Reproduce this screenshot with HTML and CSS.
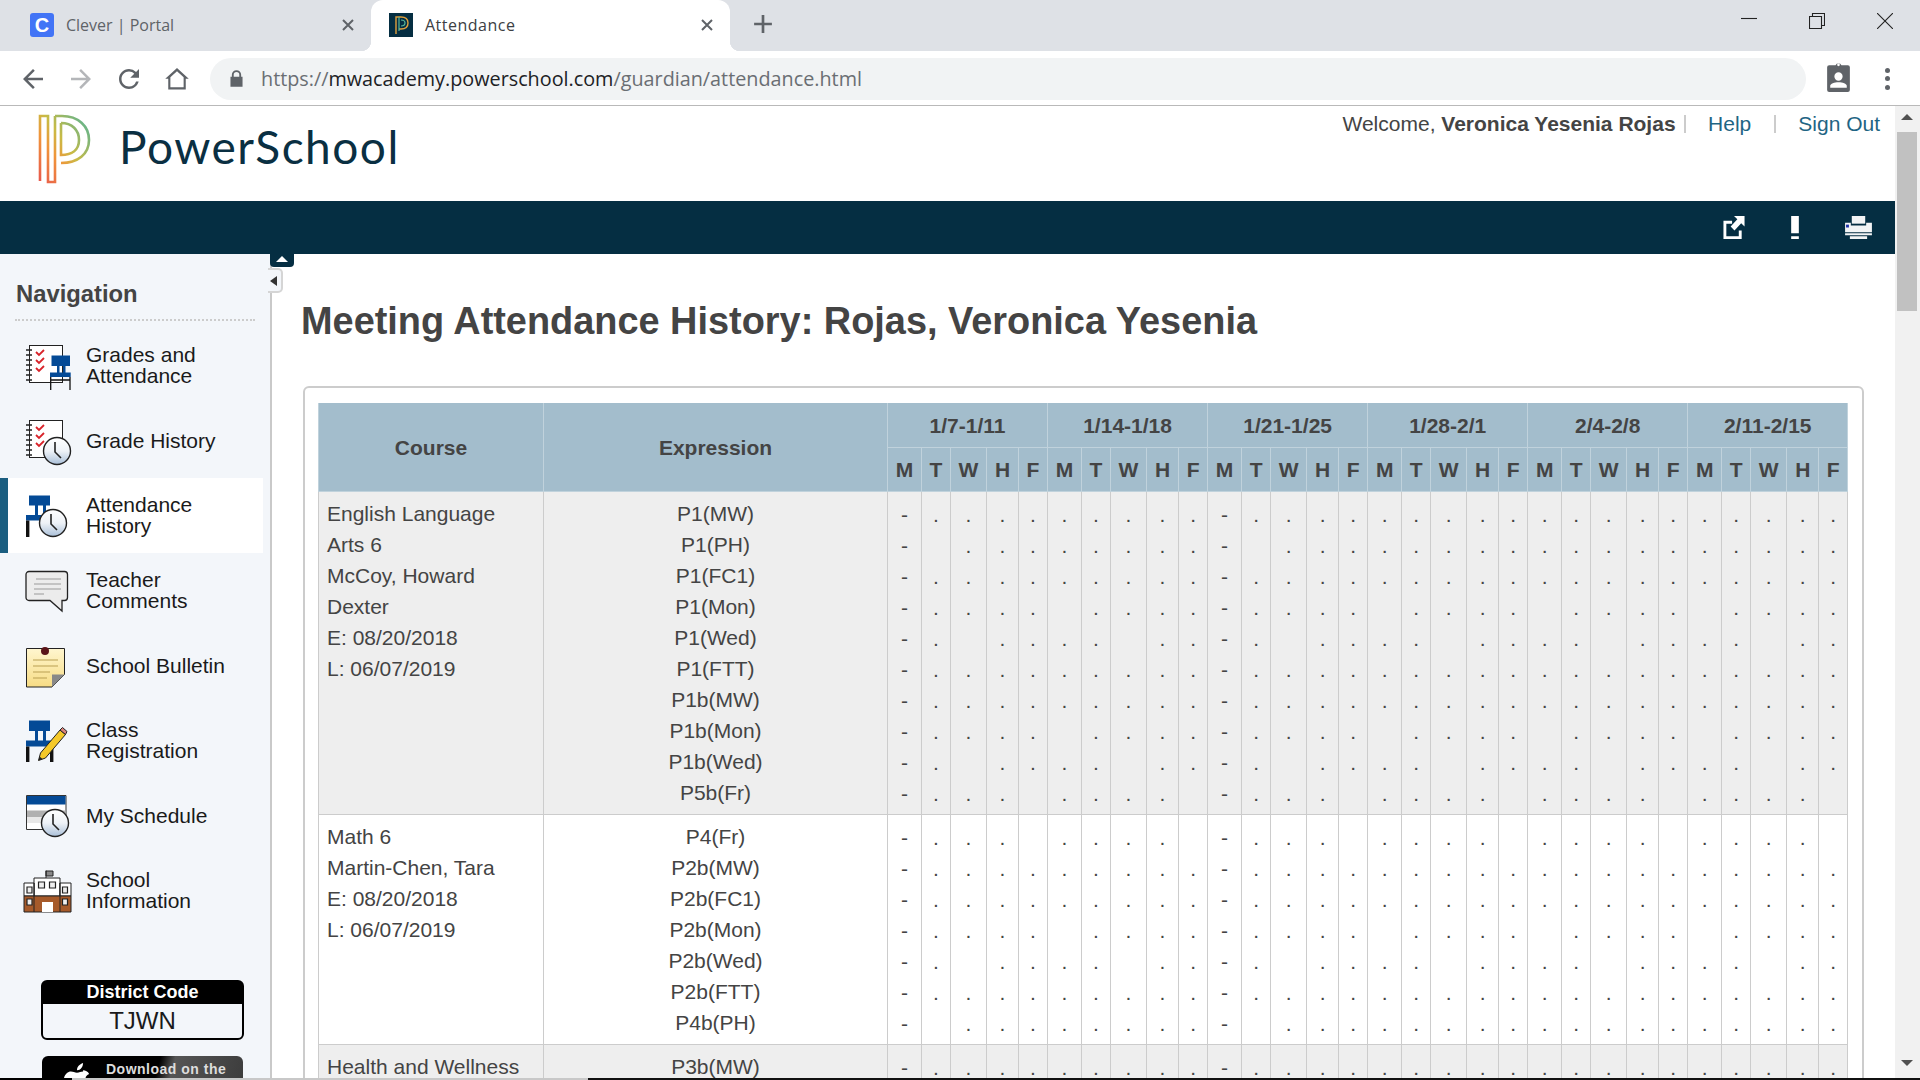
FILE: index.html
```html
<!DOCTYPE html>
<html>
<head>
<meta charset="utf-8">
<title>Attendance</title>
<link rel="stylesheet" href="styles.css">
</head>
<body>

<svg class="defs" width="0" height="0">
  <defs>
    <linearGradient id="clockfill" x1="0" y1="0" x2="0" y2="1">
      <stop offset="0" stop-color="#ffffff"/>
      <stop offset="0.5" stop-color="#eef2f7"/>
      <stop offset="1" stop-color="#a9bfd8"/>
    </linearGradient>
    <linearGradient id="notefill" x1="0" y1="0" x2="0" y2="1">
      <stop offset="0" stop-color="#fff6cf"/>
      <stop offset="1" stop-color="#f7dc84"/>
    </linearGradient>
    <linearGradient id="logoline" x1="0" y1="1" x2="1" y2="0">
      <stop offset="0" stop-color="#e8584c"/>
      <stop offset="0.35" stop-color="#f0953a"/>
      <stop offset="0.55" stop-color="#c9bb45"/>
      <stop offset="1" stop-color="#4fb39a"/>
    </linearGradient>
    <symbol id="notebook" viewBox="0 0 48 48">
      <rect x="5.5" y="3.5" width="33" height="37" fill="#fff" stroke="#222" stroke-width="1"/>
      <path d="M2 8h6M2 13h6M2 18h6M2 23h6M2 28h6M2 33h6M2 38h6" stroke="#222" stroke-width="1.4"/>
      <path d="M12 10l3 3 5-5M12 18l3 3 5-5M12 26l3 3 5-5" fill="none" stroke="#d8232a" stroke-width="1.8"/>
    </symbol>
    <symbol id="clock" viewBox="0 0 30 30">
      <circle cx="15" cy="15" r="13.5" fill="url(#clockfill)" stroke="#222" stroke-width="1.4"/>
      <path d="M13 6v10l6 6" fill="none" stroke="#222" stroke-width="1.6"/>
    </symbol>
  </defs>
</svg>

<div class="tabstrip">
  <div class="tab">
    <span class="favicon clever">C</span>
    <span class="tabtitle">Clever | Portal</span>
    <svg class="tabclose" viewBox="0 0 12 12"><path d="M1 1l10 10M11 1L1 11"/></svg>
  </div>
  <div class="tab active">
    <svg class="favicon" viewBox="0 0 24 24">
      <rect width="24" height="24" fill="#052e42"/>
      <path d="M7 21V4h5c5 0 7 3 7 6s-2 6-7 6h-2" fill="none" stroke="#e0a03c" stroke-width="1.4"/>
      <path d="M10 4v14M12 7c3 0 4 1 4 3s-1 3-4 3" fill="none" stroke="#58b79b" stroke-width="1.2"/>
    </svg>
    <span class="tabtitle">Attendance</span>
    <svg class="tabclose" viewBox="0 0 12 12"><path d="M1 1l10 10M11 1L1 11"/></svg>
  </div>
  <svg class="newtab" viewBox="0 0 18 18"><path d="M9 1v16M1 9h16"/></svg>
  <div class="winbuttons">
    <span class="winbtn"><svg viewBox="0 0 16 16"><path d="M0 5.5h16"/></svg></span>
    <span class="winbtn"><svg viewBox="0 0 16 16"><path d="M.5 3.5h12v12H.5zM3.5 3.5V.5h12v12h-3"/></svg></span>
    <span class="winbtn"><svg viewBox="0 0 16 16"><path d="M0 0l16 16M16 0L0 16"/></svg></span>
  </div>
</div>

<div class="toolbar">
  <svg class="toolicon" viewBox="0 0 24 24"><path d="M20 11H7.83l5.59-5.59L12 4l-8 8 8 8 1.41-1.41L7.83 13H20v-2z"/></svg>
  <svg class="toolicon faded" viewBox="0 0 24 24"><path d="M12 4l-1.41 1.41L16.17 11H4v2h12.17l-5.58 5.59L12 20l8-8z"/></svg>
  <svg class="toolicon" viewBox="0 0 24 24"><path d="M17.65 6.35A7.958 7.958 0 0 0 12 4c-4.42 0-7.99 3.58-7.99 8s3.57 8 7.99 8c3.73 0 6.84-2.55 7.73-6h-2.08A5.99 5.99 0 0 1 12 18c-3.31 0-6-2.69-6-6s2.69-6 6-6c1.66 0 3.14.69 4.22 1.78L13 11h7V4l-2.35 2.35z"/></svg>
  <svg class="toolicon" viewBox="0 0 24 24"><path d="M12 5.7l5.3 4.8V18.5H6.7v-8L12 5.7M12 3.2L2.6 11.7H5v8.6h14v-8.6h2.4L12 3.2z"/></svg>
  <div class="addressbar">
    <svg class="lock" viewBox="0 0 14 18"><path d="M2 7V5a5 5 0 0 1 10 0v2h1.5v11H.5V7H2zm2 0h6V5a3 3 0 0 0-6 0v2z"/></svg>
    <span class="url">https://<b>mwacademy.powerschool.com</b>/guardian/attendance.html</span>
  </div>
  <svg class="badge" viewBox="0 0 24 30"><path d="M3 4h6.2a3 3 0 0 1 5.6 0H21a2 2 0 0 1 2 2v22a2 2 0 0 1-2 2H3a2 2 0 0 1-2-2V6a2 2 0 0 1 2-2zm9-1.6a1.3 1.3 0 1 0 0 2.6 1.3 1.3 0 0 0 0-2.6zM12 11a4 4 0 1 0 0 8 4 4 0 0 0 0-8zm-8 15h16v-2c0-2-4-3.500-8-3.500S4 22 4 24v2z"/></svg>
  <div class="kebab"><i></i><i></i><i></i></div>
</div>

<div class="viewport">
  <div class="page">

    <header class="siteheader">
      <div class="brand">
        <svg class="logomark" viewBox="0 0 56 72">
          <path d="M4 69V4h8v66h7V4M19 4h7c16 0 27 10 27 24S42 51 25 51M25 11c11 0 18 7 18 17s-7 15-18 15V11" fill="none" stroke="url(#logoline)" stroke-width="2.6"/>
        </svg>
        <span class="wordmark">PowerSchool</span>
      </div>
      <div class="usernav">
        <span>Welcome, <strong>Veronica Yesenia Rojas</strong></span>
        <a class="sep">Help</a>
        <a class="sep">Sign Out</a>
      </div>
    </header>

    <div class="navybar">
      <svg class="baricon export" viewBox="0 0 22 24"><path d="M0 5h9v3H3v13h13v-6h3v9H0zM11 0h11v11l-3.500-3.500-7 7.500-4-4 7-7.500z"/></svg>
      <svg class="baricon alert" viewBox="0 0 8 24"><path d="M0 0h8v18H0zM0 21h8v3H0z"/></svg>
      <svg class="baricon printer" viewBox="0 0 30 24">
        <path d="M8 0h14v8H8z"/>
        <path d="M1 7h6v3h16V7h6v10H1z"/>
        <path d="M1 18h28v2H1zM6 21h18v3H6z"/>
        <rect x="2" y="9" width="3" height="3" fill="#1c2fa8"/>
      </svg>
    </div>

    <div class="layout">
      <aside class="sidebar">
        <div class="collapse-up"></div>
        <div class="collapse-left"></div>
        <h2 class="navtitle">Navigation</h2>
        <ul class="navlist">
          <li class="navitem">
            <svg class="navicon" viewBox="0 0 48 48">
              <use href="#notebook" width="48" height="48"/>
              <path d="M27.500 13.500h18.500v10.500h-18.500z" fill="#044a96"/>
              <path d="M33 24h2.500v7H33zM39 24h2.500v7H39z" fill="#044a96"/>
              <path d="M26 30.500h20.700v4.500H26z" fill="#044a96"/>
              <path d="M26.700 35v13M46 35v13M26.700 38h19.300" fill="none" stroke="#111" stroke-width="1.300"/>
            </svg>
            <span class="twoline">Grades and<br>Attendance</span>
          </li>
          <li class="navitem">
            <svg class="navicon" viewBox="0 0 48 48">
              <use href="#notebook" width="48" height="48"/>
              <use href="#clock" x="18" y="19" width="30" height="30"/>
            </svg>
            <span>Grade History</span>
          </li>
          <li class="navitem current">
            <svg class="navicon" viewBox="0 0 48 48">
              <path d="M5 3.500h21v10H5zM11 13.500h3v10h-3zM19 13.500h3v10h-3zM2 23h18v5.500H2z" fill="#044a96"/>
              <path d="M2 28.500h3.400V45H2z" fill="#111"/>
              <use href="#clock" x="14" y="16" width="30" height="30"/>
            </svg>
            <span class="twoline">Attendance<br>History</span>
          </li>
          <li class="navitem">
            <svg class="navicon" viewBox="0 0 48 48">
              <path d="M5 4.500h35.500a3 3 0 0 1 3 3v23a3 3 0 0 1-3 3H38V44L26 33.500H5a3 3 0 0 1-3-3v-23a3 3 0 0 1 3-3z" fill="#ececec" stroke="#222" stroke-width="1.300"/>
              <path d="M12 12h25M10 17h27M10 22h27M10 27h10" stroke="#999" stroke-width="1.200"/>
            </svg>
            <span class="twoline">Teacher<br>Comments</span>
          </li>
          <li class="navitem">
            <svg class="navicon" viewBox="0 0 48 48">
              <path d="M2.500 6.500h38v26L28 45H2.500z" fill="url(#notefill)" stroke="#222" stroke-width="1"/>
              <path d="M40.500 32.500H28V45z" fill="#888"/>
              <path d="M9 18h25M9 24h25M9 30h17M9 36h14" stroke="#b9a052" stroke-width="1.200"/>
              <circle cx="21" cy="9" r="4" fill="#5a1418"/>
            </svg>
            <span>School Bulletin</span>
          </li>
          <li class="navitem">
            <svg class="navicon" viewBox="0 0 48 48">
              <path d="M5 3.500h21V14H5zM11 14h3v9.500h-3zM19 14h3v9.500h-3zM2 23.500h27v6H2z" fill="#044a96"/>
              <path d="M2 29.500h3.400V45H2zM26 29.500h3.400V45H26z" fill="#111"/>
              <path d="M14.500 43.500l2-7.500L36 13l5.500 4.500L21.500 41z" fill="#f5c92a" stroke="#222" stroke-width="1"/>
              <path d="M36 13l2.500-2.500 4.500 4-1.500 3z" fill="#d9827a" stroke="#222" stroke-width="1"/>
              <path d="M14.500 43.500l1-4 3 2.500z" fill="#222"/>
            </svg>
            <span class="twoline">Class<br>Registration</span>
          </li>
          <li class="navitem">
            <svg class="navicon" viewBox="0 0 48 48">
              <path d="M2.500 3.500h39.500v34H2.500z" fill="#fff" stroke="#333" stroke-width="1"/>
              <path d="M3 4h38.500v8.500H3z" fill="#044a96"/>
              <path d="M3 18.500h38.500V25H3z" fill="#b0b0b0"/>
              <path d="M3 25h38.500v6H3z" fill="#e8e8e8"/>
              <use href="#clock" x="16" y="16" width="30" height="30"/>
            </svg>
            <span>My Schedule</span>
          </li>
          <li class="navitem">
            <svg class="navicon" viewBox="0 0 48 48">
              <path d="M22 11V3.500M22 4h7v5h-7z" fill="#888" stroke="#222" stroke-width="1"/>
              <path d="M10 11h26v18H10z" fill="#fff" stroke="#222" stroke-width="1"/>
              <path d="M0 16h10v13H0zM36 16h11v13H36z" fill="#fff" stroke="#222" stroke-width="1"/>
              <path d="M0 29h47v16H0z" fill="#a65a2a" stroke="#222" stroke-width="1"/>
              <path d="M10 16v29M36 16v29" stroke="#222" stroke-width="1"/>
              <path d="M14.500 15h6v6h-6zM25.500 15h6v6h-6zM3 20h5v6H3zM38.500 20h5v6h-5zM3 32h5v6H3zM38.500 32h5v6h-5z" fill="#eee" stroke="#222" stroke-width="1.200"/>
              <path d="M18 35h11v10H18z" fill="#fff"/>
            </svg>
            <span class="twoline">School<br>Information</span>
          </li>
        </ul>
        <div class="districtcode">
          <div class="codelabel">District Code</div>
          <div class="codevalue">TJWN</div>
        </div>
        <div class="appbadge">
          <svg class="apple" viewBox="0 0 24 28"><path d="M17 7c-2 0-3 1-5 1S9 7 7 7c-3 0-6 3-6 8 0 6 4 12 7 12 2 0 2-1 4-1s2 1 4 1c3 0 6-5 7-8-3-1-4-4-4-6s1-3 3-4c-1-2-3-3-5-3zM12 6c0-3 2-5 5-6 0 3-2 6-5 6z"/></svg>
          <span>Download on the</span>
        </div>
      </aside>

      <main class="content">
        <h1 class="pagetitle">Meeting Attendance History: Rojas, Veronica Yesenia</h1>
        <div class="panel">
          <table class="attendance">
            <colgroup>
              <col class="c-course"><col class="c-expr">
              <col class="c-m"><col class="c-t"><col class="c-w"><col class="c-h"><col class="c-f">
              <col class="c-m"><col class="c-t"><col class="c-w"><col class="c-h"><col class="c-f">
              <col class="c-m"><col class="c-t"><col class="c-w"><col class="c-h"><col class="c-f">
              <col class="c-m"><col class="c-t"><col class="c-w"><col class="c-h"><col class="c-f">
              <col class="c-m"><col class="c-t"><col class="c-w"><col class="c-h"><col class="c-f">
              <col class="c-m"><col class="c-t"><col class="c-w"><col class="c-h"><col class="c-f">
            </colgroup>
            <thead>
              <tr>
                <th rowspan="2">Course</th>
                <th rowspan="2">Expression</th>
                <th colspan="5">1/7-1/11</th>
                <th colspan="5">1/14-1/18</th>
                <th colspan="5">1/21-1/25</th>
                <th colspan="5">1/28-2/1</th>
                <th colspan="5">2/4-2/8</th>
                <th colspan="5">2/11-2/15</th>
              </tr>
              <tr>
                <th>M</th><th>T</th><th>W</th><th>H</th><th>F</th>
                <th>M</th><th>T</th><th>W</th><th>H</th><th>F</th>
                <th>M</th><th>T</th><th>W</th><th>H</th><th>F</th>
                <th>M</th><th>T</th><th>W</th><th>H</th><th>F</th>
                <th>M</th><th>T</th><th>W</th><th>H</th><th>F</th>
                <th>M</th><th>T</th><th>W</th><th>H</th><th>F</th>
              </tr>
            </thead>
            <tbody class="shaded">
              <tr class="first">
                <td class="course" rowspan="10">English Language<br>Arts 6<br>McCoy, Howard<br>Dexter<br>E: 08/20/2018<br>L: 06/07/2019</td>
                <td>P1(MW)</td>
                <td>-</td><td>.</td><td>.</td><td>.</td><td>.</td> <td>.</td><td>.</td><td>.</td><td>.</td><td>.</td> <td>-</td><td>.</td><td>.</td><td>.</td><td>.</td> <td>.</td><td>.</td><td>.</td><td>.</td><td>.</td> <td>.</td><td>.</td><td>.</td><td>.</td><td>.</td> <td>.</td><td>.</td><td>.</td><td>.</td><td>.</td>
              </tr>
              <tr>
                <td>P1(PH)</td>
                <td>-</td><td></td><td>.</td><td>.</td><td>.</td> <td>.</td><td>.</td><td>.</td><td>.</td><td>.</td> <td>-</td><td></td><td>.</td><td>.</td><td>.</td> <td>.</td><td>.</td><td>.</td><td>.</td><td>.</td> <td>.</td><td>.</td><td>.</td><td>.</td><td>.</td> <td>.</td><td>.</td><td>.</td><td>.</td><td>.</td>
              </tr>
              <tr>
                <td>P1(FC1)</td>
                <td>-</td><td>.</td><td>.</td><td>.</td><td>.</td> <td>.</td><td>.</td><td>.</td><td>.</td><td>.</td> <td>-</td><td>.</td><td>.</td><td>.</td><td>.</td> <td>.</td><td>.</td><td>.</td><td>.</td><td>.</td> <td>.</td><td>.</td><td>.</td><td>.</td><td>.</td> <td>.</td><td>.</td><td>.</td><td>.</td><td>.</td>
              </tr>
              <tr>
                <td>P1(Mon)</td>
                <td>-</td><td>.</td><td>.</td><td>.</td><td>.</td> <td></td><td>.</td><td>.</td><td>.</td><td>.</td> <td>-</td><td>.</td><td>.</td><td>.</td><td>.</td> <td></td><td>.</td><td>.</td><td>.</td><td>.</td> <td></td><td>.</td><td>.</td><td>.</td><td>.</td> <td></td><td>.</td><td>.</td><td>.</td><td>.</td>
              </tr>
              <tr>
                <td>P1(Wed)</td>
                <td>-</td><td>.</td><td></td><td>.</td><td>.</td> <td>.</td><td>.</td><td></td><td>.</td><td>.</td> <td>-</td><td>.</td><td></td><td>.</td><td>.</td> <td>.</td><td>.</td><td></td><td>.</td><td>.</td> <td>.</td><td>.</td><td></td><td>.</td><td>.</td> <td>.</td><td>.</td><td></td><td>.</td><td>.</td>
              </tr>
              <tr>
                <td>P1(FTT)</td>
                <td>-</td><td>.</td><td>.</td><td>.</td><td>.</td> <td>.</td><td>.</td><td>.</td><td>.</td><td>.</td> <td>-</td><td>.</td><td>.</td><td>.</td><td>.</td> <td>.</td><td>.</td><td>.</td><td>.</td><td>.</td> <td>.</td><td>.</td><td>.</td><td>.</td><td>.</td> <td>.</td><td>.</td><td>.</td><td>.</td><td>.</td>
              </tr>
              <tr>
                <td>P1b(MW)</td>
                <td>-</td><td>.</td><td>.</td><td>.</td><td>.</td> <td>.</td><td>.</td><td>.</td><td>.</td><td>.</td> <td>-</td><td>.</td><td>.</td><td>.</td><td>.</td> <td>.</td><td>.</td><td>.</td><td>.</td><td>.</td> <td>.</td><td>.</td><td>.</td><td>.</td><td>.</td> <td>.</td><td>.</td><td>.</td><td>.</td><td>.</td>
              </tr>
              <tr>
                <td>P1b(Mon)</td>
                <td>-</td><td>.</td><td>.</td><td>.</td><td>.</td> <td></td><td>.</td><td>.</td><td>.</td><td>.</td> <td>-</td><td>.</td><td>.</td><td>.</td><td>.</td> <td></td><td>.</td><td>.</td><td>.</td><td>.</td> <td></td><td>.</td><td>.</td><td>.</td><td>.</td> <td></td><td>.</td><td>.</td><td>.</td><td>.</td>
              </tr>
              <tr>
                <td>P1b(Wed)</td>
                <td>-</td><td>.</td><td></td><td>.</td><td>.</td> <td>.</td><td>.</td><td></td><td>.</td><td>.</td> <td>-</td><td>.</td><td></td><td>.</td><td>.</td> <td>.</td><td>.</td><td></td><td>.</td><td>.</td> <td>.</td><td>.</td><td></td><td>.</td><td>.</td> <td>.</td><td>.</td><td></td><td>.</td><td>.</td>
              </tr>
              <tr class="last">
                <td>P5b(Fr)</td>
                <td>-</td><td>.</td><td>.</td><td>.</td><td></td> <td>.</td><td>.</td><td>.</td><td>.</td><td></td> <td>-</td><td>.</td><td>.</td><td>.</td><td></td> <td>.</td><td>.</td><td>.</td><td>.</td><td></td> <td>.</td><td>.</td><td>.</td><td>.</td><td></td> <td>.</td><td>.</td><td>.</td><td>.</td><td></td>
              </tr>
            </tbody>
            <tbody>
              <tr class="first">
                <td class="course" rowspan="7">Math 6<br>Martin-Chen, Tara<br>E: 08/20/2018<br>L: 06/07/2019</td>
                <td>P4(Fr)</td>
                <td>-</td><td>.</td><td>.</td><td>.</td><td></td> <td>.</td><td>.</td><td>.</td><td>.</td><td></td> <td>-</td><td>.</td><td>.</td><td>.</td><td></td> <td>.</td><td>.</td><td>.</td><td>.</td><td></td> <td>.</td><td>.</td><td>.</td><td>.</td><td></td> <td>.</td><td>.</td><td>.</td><td>.</td><td></td>
              </tr>
              <tr>
                <td>P2b(MW)</td>
                <td>-</td><td>.</td><td>.</td><td>.</td><td>.</td> <td>.</td><td>.</td><td>.</td><td>.</td><td>.</td> <td>-</td><td>.</td><td>.</td><td>.</td><td>.</td> <td>.</td><td>.</td><td>.</td><td>.</td><td>.</td> <td>.</td><td>.</td><td>.</td><td>.</td><td>.</td> <td>.</td><td>.</td><td>.</td><td>.</td><td>.</td>
              </tr>
              <tr>
                <td>P2b(FC1)</td>
                <td>-</td><td>.</td><td>.</td><td>.</td><td>.</td> <td>.</td><td>.</td><td>.</td><td>.</td><td>.</td> <td>-</td><td>.</td><td>.</td><td>.</td><td>.</td> <td>.</td><td>.</td><td>.</td><td>.</td><td>.</td> <td>.</td><td>.</td><td>.</td><td>.</td><td>.</td> <td>.</td><td>.</td><td>.</td><td>.</td><td>.</td>
              </tr>
              <tr>
                <td>P2b(Mon)</td>
                <td>-</td><td>.</td><td>.</td><td>.</td><td>.</td> <td></td><td>.</td><td>.</td><td>.</td><td>.</td> <td>-</td><td>.</td><td>.</td><td>.</td><td>.</td> <td></td><td>.</td><td>.</td><td>.</td><td>.</td> <td></td><td>.</td><td>.</td><td>.</td><td>.</td> <td></td><td>.</td><td>.</td><td>.</td><td>.</td>
              </tr>
              <tr>
                <td>P2b(Wed)</td>
                <td>-</td><td>.</td><td></td><td>.</td><td>.</td> <td>.</td><td>.</td><td></td><td>.</td><td>.</td> <td>-</td><td>.</td><td></td><td>.</td><td>.</td> <td>.</td><td>.</td><td></td><td>.</td><td>.</td> <td>.</td><td>.</td><td></td><td>.</td><td>.</td> <td>.</td><td>.</td><td></td><td>.</td><td>.</td>
              </tr>
              <tr>
                <td>P2b(FTT)</td>
                <td>-</td><td>.</td><td>.</td><td>.</td><td>.</td> <td>.</td><td>.</td><td>.</td><td>.</td><td>.</td> <td>-</td><td>.</td><td>.</td><td>.</td><td>.</td> <td>.</td><td>.</td><td>.</td><td>.</td><td>.</td> <td>.</td><td>.</td><td>.</td><td>.</td><td>.</td> <td>.</td><td>.</td><td>.</td><td>.</td><td>.</td>
              </tr>
              <tr class="last">
                <td>P4b(PH)</td>
                <td>-</td><td></td><td>.</td><td>.</td><td>.</td> <td>.</td><td>.</td><td>.</td><td>.</td><td>.</td> <td>-</td><td></td><td>.</td><td>.</td><td>.</td> <td>.</td><td>.</td><td>.</td><td>.</td><td>.</td> <td>.</td><td>.</td><td>.</td><td>.</td><td>.</td> <td>.</td><td>.</td><td>.</td><td>.</td><td>.</td>
              </tr>
            </tbody>
            <tbody class="shaded">
              <tr class="first">
                <td class="course">Health and Wellness</td>
                <td>P3b(MW)</td>
                <td>-</td><td>.</td><td>.</td><td>.</td><td>.</td> <td>.</td><td>.</td><td>.</td><td>.</td><td>.</td> <td>-</td><td>.</td><td>.</td><td>.</td><td>.</td> <td>.</td><td>.</td><td>.</td><td>.</td><td>.</td> <td>.</td><td>.</td><td>.</td><td>.</td><td>.</td> <td>.</td><td>.</td><td>.</td><td>.</td><td>.</td>
              </tr>
            </tbody>
          </table>
        </div>
      </main>
    </div>
  </div>

  <div class="scrollbar">
    <div class="arrow up"></div>
    <div class="thumb"></div>
    <div class="arrow down"></div>
  </div>
</div>

<div class="taskstrip"></div>

</body>
</html>
```

FILE: styles.css
```css
* {
    box-sizing: border-box;
}

html, body {
    margin: 0;
    height: 100%;
    overflow: hidden;
}

body {
    display: flex;
    flex-direction: column;
    height: 1080px;
    font-family: "Liberation Sans", Arial, sans-serif;
    color: #444;
    background: #fff;
}

.defs {
    position: absolute;
}

/* browser chrome */
.tabstrip {
    display: flex;
    align-items: center;
    flex: none;
    height: 51px;
    padding-left: 12px;
    background: #dee1e6;
}

.tab {
    position: relative;
    display: flex;
    align-items: center;
    width: 359px;
    height: 51px;
    padding: 0 17px 2px 18px;
}

.tab.active {
    background: #fff;
    border-radius: 12px 12px 0 0;
}

.tab.active::before,
.tab.active::after {
    content: "";
    position: absolute;
    bottom: 0;
    width: 10px;
    height: 10px;
}

.tab.active::before {
    left: -10px;
    background: radial-gradient(circle at 0 0, transparent 10px, #fff 10.5px);
}

.tab.active::after {
    right: -10px;
    background: radial-gradient(circle at 100% 0, transparent 10px, #fff 10.5px);
}

.favicon {
    flex: none;
    width: 24px;
    height: 24px;
}

.clever {
    border-radius: 3px;
    background: #4274f6;
    color: #fff;
    font-weight: bold;
    font-size: 20px;
    line-height: 24px;
    text-align: center;
}

.tabtitle {
    flex: 1;
    margin-left: 12px;
    font-family: "Open Sans", sans-serif;
    font-size: 16px;
    color: #5f6368;
}

.tab.active .tabtitle {
    color: #3c4043;
    letter-spacing: .5px;
}

.tabclose {
    width: 12px;
    height: 12px;
    fill: none;
    stroke: #5f6368;
    stroke-width: 2;
}

.newtab {
    width: 20px;
    height: 20px;
    margin: -3px 0 0 23px;
    fill: none;
    stroke: #5f6368;
    stroke-width: 2.400;
}

.winbuttons {
    display: flex;
    margin-left: auto;
    padding-right: 1px;
}

.winbtn {
    display: flex;
    align-items: center;
    justify-content: center;
    width: 68px;
    height: 40px;
    margin-top: -9px;
}

.winbtn svg {
    width: 16px;
    height: 16px;
    fill: none;
    stroke: #222;
    stroke-width: 1.100;
}

.toolbar {
    display: flex;
    align-items: center;
    flex: none;
    height: 55px;
    padding: 1px 0 0 18px;
    background: #fff;
    border-bottom: 1px solid #b9b9b9;
}

.toolicon {
    flex: none;
    width: 30px;
    height: 30px;
    margin-right: 18px;
    fill: #5f6368;
}

.toolicon.faded {
    fill: #b4b6b9;
}

.addressbar {
    display: flex;
    align-items: center;
    flex: 1;
    height: 42px;
    padding-left: 20px;
    border-radius: 21px;
    background: #f1f3f4;
}

.lock {
    width: 13px;
    height: 17px;
    fill: #5f6368;
}

.url {
    margin-left: 18px;
    font-family: "Open Sans", sans-serif;
    font-size: 19.800px;
    color: #6a6e73;
}

.url b {
    font-weight: normal;
    color: #202124;
}

.badge {
    flex: none;
    width: 25px;
    height: 31px;
    margin: 0 -1px 4px 20px;
    fill: #5f6368;
}

.kebab {
    display: flex;
    flex-direction: column;
    gap: 3.500px;
    flex: none;
    margin: 0 30px 0 35px;
}

.kebab i {
    width: 5px;
    height: 5px;
    border-radius: 50%;
    background: #5f6368;
}

/* page */
.viewport {
    display: flex;
    flex: 1;
    min-height: 0;
    overflow: hidden;
}

.page {
    flex: 1;
    min-width: 0;
    display: flex;
    flex-direction: column;
}

.siteheader {
    display: flex;
    justify-content: space-between;
    flex: none;
    height: 95px;
}

.brand {
    display: flex;
    align-items: flex-start;
    padding: 6px 0 0 36px;
}

.logomark {
    width: 56px;
    height: 72px;
}

.wordmark {
    margin: 7px 0 0 27px;
    font-family: "Lato", sans-serif;
    font-weight: 400;
    font-size: 46px;
    line-height: 56px;
    letter-spacing: 1.500px;
    color: #0a2f42;
}

.usernav {
    display: flex;
    align-items: flex-start;
    padding: 6px 15px 0 0;
    font-size: 21px;
    line-height: 24px;
}

.usernav strong {
    color: #444;
}

.usernav a {
    color: #1f6584;
}

.usernav .sep {
    margin-left: 8px;
    padding-left: 24.500px;
    background: linear-gradient(#ccc, #ccc) no-repeat 0 3px / 2px 18px;
}

.usernav a.sep:last-child {
    margin-left: 22.500px;
}

.navybar {
    display: flex;
    align-items: center;
    justify-content: flex-end;
    flex: none;
    height: 53px;
    padding-right: 22px;
    background: #052e42;
}

.baricon {
    fill: #fff;
    height: 23px;
}

.export {
    width: 22px;
    margin-right: 46px;
}

.alert {
    width: 8px;
    margin-right: 45px;
}

.printer {
    width: 29px;
    fill: #f2f4f5;
}

.layout {
    display: flex;
    flex: 1;
    min-height: 0;
}

/* left navigation */
.sidebar {
    position: relative;
    flex: none;
    width: 272px;
    background: #f3f6fa;
    border-right: 2px solid #c9c9c9;
}

.collapse-up {
    position: absolute;
    top: 0;
    left: 270px;
    width: 24px;
    height: 13px;
    background: #052e42;
    border-radius: 0 0 4px 4px;
}

.collapse-up::after {
    content: "";
    position: absolute;
    top: 2px;
    left: 6px;
    border: 6px solid transparent;
    border-top: 0;
    border-bottom-color: #fff;
}

.collapse-left {
    position: absolute;
    top: 14px;
    left: 268px;
    width: 15px;
    height: 25px;
    background: #f3f6fa;
    border: 2px solid #d5d5d5;
    border-left: 0;
    border-radius: 0 5px 5px 0;
}

.collapse-left::after {
    content: "";
    position: absolute;
    top: 6px;
    left: 2px;
    border: 5.500px solid transparent;
    border-left: 0;
    border-right: 7px solid #333;
}

.navtitle {
    margin: 0 15px;
    padding: 27px 0 12px 1px;
    font-size: 23.800px;
    line-height: 26px;
    font-weight: bold;
    color: #444;
    border-bottom: 2px dotted #ccc;
}

.navlist {
    list-style: none;
    margin: 7px 0 0;
    padding: 0;
}

.navitem {
    display: flex;
    align-items: center;
    gap: 14px;
    height: 75px;
    padding-left: 24px;
    font-size: 21px;
    line-height: 21px;
    color: #1a1a1a;
}

.twoline {
    margin-top: -2px;
}

.navitem.current {
    width: 263px;
    padding-left: 16px;
    background: #fff;
    border-left: 8px solid #1b5e80;
}

.navicon {
    flex: none;
    width: 48px;
    height: 48px;
    overflow: visible;
}

.districtcode {
    width: 203px;
    height: 60px;
    margin: 52px 0 0 41px;
    border: 2px solid #000;
    border-radius: 6px;
    text-align: center;
    color: #1a1a1a;
}

.codelabel {
    height: 22px;
    background: #000;
    color: #fff;
    font-size: 18px;
    font-weight: bold;
    line-height: 21px;
}

.codevalue {
    font-size: 24px;
    line-height: 34px;
}

.appbadge {
    display: flex;
    align-items: flex-start;
    width: 201px;
    height: 56px;
    margin: 16px 0 0 42px;
    padding: 5px 0 0 20px;
    border-radius: 6px;
    background: linear-gradient(105deg, #000 55%, #555 62%, #3a3a3a);
    color: #ddd;
    font-size: 14px;
    font-weight: bold;
    letter-spacing: .5px;
}

.apple {
    width: 30px;
    height: 34px;
    margin: 2px 14px 0 0;
    fill: #fff;
}

.content {
    flex: 1;
    min-width: 0;
    padding: 0 31px;
    overflow: hidden;
}

.pagetitle {
    margin: 0 0 0 -2px;
    padding-top: 43px;
    font-size: 37.900px;
    line-height: 48px;
    font-weight: bold;
    color: #444;
}

.panel {
    margin-top: 41px;
    padding: 15px 14px 15px 13px;
    border: 2px solid #ccc;
    border-radius: 6px;
}

/* attendance grid */
.attendance {
    width: 1530px;
    table-layout: fixed;
    border-collapse: collapse;
    font-size: 21px;
}

.c-course { width: 225px; }
.c-expr { width: 344px; }
.c-m { width: 34px; }
.c-t { width: 29px; }
.c-w { width: 36px; }
.c-h { width: 32px; }
.c-f { width: 29px; }

.attendance th {
    height: 44px;
    padding: 2px 0 0;
    background: #a3bdcc;
    border: 1px solid #c0d2dc;
    border-top: 0;
    font-weight: bold;
    color: #444;
    text-align: center;
}

.attendance td {
    height: 31px;
    padding: 0;
    border-left: 1px solid #ccc;
    border-right: 1px solid #ccc;
    line-height: 31px;
    text-align: center;
    color: #444;
}

.attendance tbody tr.first td {
    height: 38px;
    padding-top: 7px;
    border-top: 1px solid #ccc;
}

.attendance tbody tr.last td {
    height: 36px;
    padding-bottom: 5px;
}

.attendance td.course {
    padding-left: 8px;
    text-align: left;
    vertical-align: top;
}

.attendance tbody tr.first td.course {
    padding-top: 6px;
}

/* expression text sits a pixel above the marks */
.attendance tbody td:first-child:not(.course),
.attendance td.course + td {
    line-height: 29px;
    vertical-align: top;
}

.shaded {
    background: #eee;
}

/* scrollbar */
.scrollbar {
    display: flex;
    flex-direction: column;
    flex: none;
    width: 25px;
    background: #f1f1f1;
}

.arrow {
    position: relative;
    flex: none;
    height: 26px;
}

.arrow::after {
    content: "";
    position: absolute;
    left: 6px;
    border: 6px solid transparent;
}

.arrow.up::after {
    top: 8px;
    border-top: 0;
    border-bottom-color: #505050;
}

.arrow.down {
    margin-top: auto;
}

.arrow.down::after {
    top: 8px;
    border-bottom: 0;
    border-top-color: #505050;
}

.thumb {
    flex: none;
    height: 179px;
    margin: 0 3px 0 2px;
    background: #c1c1c1;
}

.taskstrip {
    flex: none;
    height: 2px;
    background: linear-gradient(90deg, #000 72px, #c8c8c8 72px, #c8c8c8 588px, #111 588px);
}
```
